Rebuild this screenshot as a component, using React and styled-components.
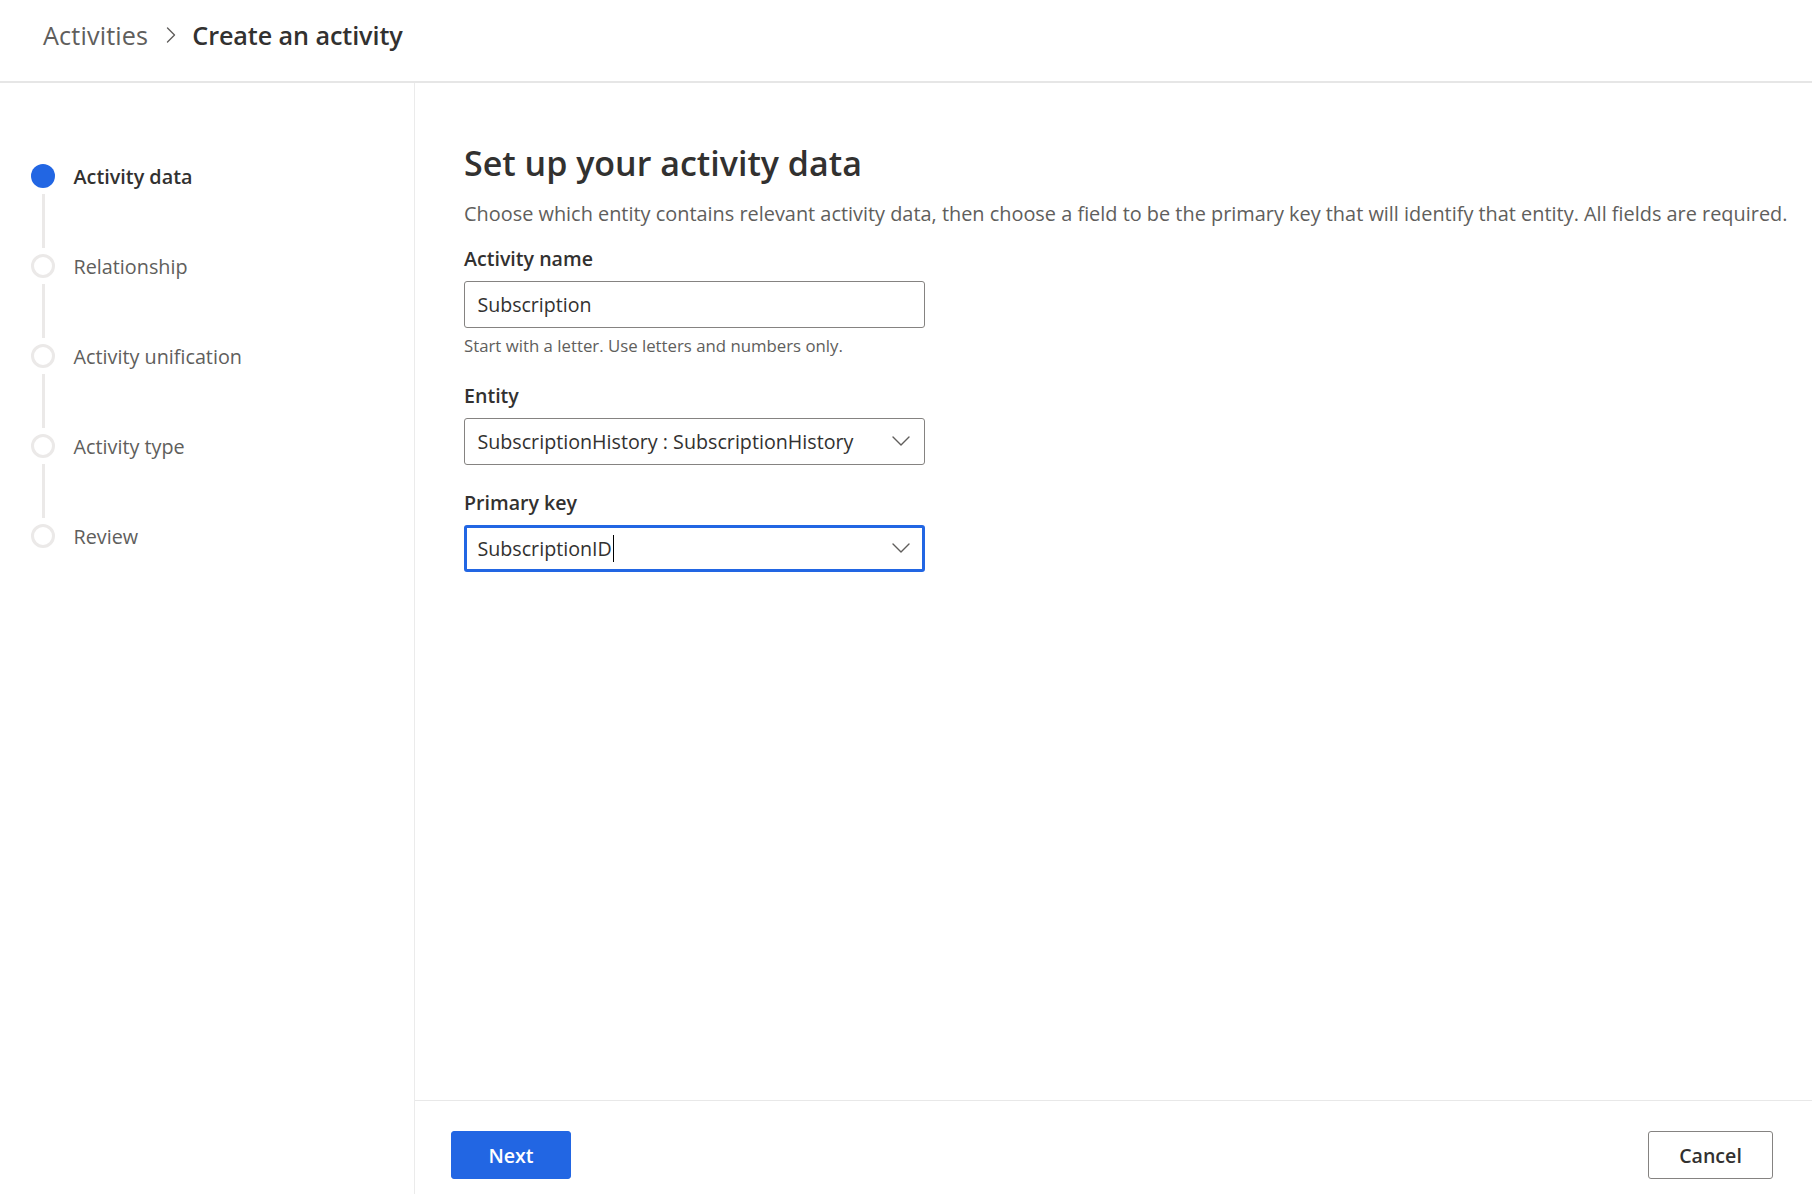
import React from "react";
import styled, { createGlobalStyle } from "styled-components";

const FONT = `"Open Sans", "Noto Sans", sans-serif`;
const BLUE = "#2266e3";

const GlobalStyle = createGlobalStyle`
  *, *::before, *::after { box-sizing: border-box; }
  html, body, #root { height: 100%; }
  body {
    margin: 0;
    background: #ffffff;
    font-family: ${FONT};
    color: #323130;
    -webkit-font-smoothing: antialiased;
  }
`;

const Page = styled.div`
  height: 100vh;
  display: flex;
  flex-direction: column;
  background: #fff;
`;

const Header = styled.header`
  height: 83px;
  flex: none;
  border-bottom: 2px solid #e6e6e6;
  padding: 17px 0 0 43px;
`;

const Breadcrumb = styled.nav`
  display: flex;
  align-items: center;
  height: 36px;
  font-size: 25.2px;
  line-height: 36px;
`;

const Crumb = styled.span`
  color: ${(p) => (p.$current ? "#323130" : "#605e5c")};
  font-weight: ${(p) => (p.$current ? 600 : 400)};
  letter-spacing: ${(p) => (p.$current ? "-0.1px" : "0.15px")};
`;

const CrumbSep = styled.span`
  display: flex;
  align-items: center;
  margin: 0 16px 0 18px;
  color: #605e5c;
`;

const Body = styled.div`
  flex: 1;
  display: flex;
  min-height: 0;
`;

const Sidebar = styled.aside`
  width: 415px;
  flex: none;
  border-right: 1px solid #ebebeb;
  padding: 81px 0 0 31px;
`;

const StepList = styled.ol`
  list-style: none;
  margin: 0;
  padding: 0;
`;

const StepRow = styled.li`
  display: flex;
  align-items: center;
  height: 24px;
  gap: 18.5px;
`;

const StepDot = styled.span`
  width: 24px;
  height: 24px;
  flex: none;
  border-radius: 50%;
  background: ${(p) => (p.$active ? BLUE : "#fff")};
  border: ${(p) => (p.$active ? "none" : "3px solid #ebe9e8")};
`;

const StepLabel = styled.span`
  font-size: 19.8px;
  line-height: 24px;
  padding-top: 2px;
  white-space: nowrap;
  color: ${(p) => (p.$active ? "#323130" : "#605e5c")};
  font-weight: ${(p) => (p.$active ? 600 : 400)};
`;

const Connector = styled.li`
  width: 3px;
  height: 54px;
  margin: 6px 0 6px 10.5px;
  background: #ebe9e8;
`;

const Main = styled.main`
  flex: 1;
  display: flex;
  flex-direction: column;
  min-width: 0;
`;

const Content = styled.section`
  flex: 1;
  padding: 59.6px 20px 0 49px;
`;

const Title = styled.h1`
  margin: 0;
  font-size: 34px;
  line-height: 40px;
  font-weight: 600;
  color: #323130;
`;

const Description = styled.p`
  margin: 17px 0 0;
  font-size: 19.9px;
  line-height: 28px;
  color: #605e5c;
  white-space: nowrap;
`;

const Form = styled.div`
  margin-top: 17px;
  width: 461px;
  display: flex;
  flex-direction: column;
  gap: 24px;
`;

const Field = styled.div`
  display: flex;
  flex-direction: column;
`;

const Label = styled.label`
  font-size: 19.6px;
  line-height: 28px;
  font-weight: 600;
  color: #323130;
  margin-bottom: 8px;
`;

const TextInput = styled.input`
  height: 47px;
  width: 100%;
  border: 1px solid #858381;
  border-radius: 3px;
  padding: 0 12.4px;
  font-family: ${FONT};
  font-size: 19.6px;
  color: #323130;
  background: #fff;
  outline: none;
`;

const Hint = styled.span`
  margin-top: 6px;
  font-size: 16.8px;
  line-height: 24px;
  color: #605e5c;
`;

const SelectBox = styled.div`
  height: 47px;
  width: 100%;
  display: flex;
  align-items: center;
  justify-content: space-between;
  border: ${(p) => (p.$focused ? `3px solid ${BLUE}` : "1px solid #858381")};
  border-radius: 3px;
  padding: ${(p) => (p.$focused ? "0 12px 0 10.4px" : "0 14px 0 12.4px")};
  font-size: 19.7px;
  color: #323130;
  background: #fff;
`;

const SelectValue = styled.span`
  display: flex;
  align-items: center;
  white-space: nowrap;
`;

const Caret = styled.span`
  display: inline-block;
  width: 1px;
  height: 27px;
  background: #000;
  margin-left: 1px;
`;

const Footer = styled.footer`
  flex: none;
  border-top: 1px solid #e8e8e8;
  padding: 30px 39px 15px 36px;
  display: flex;
  justify-content: space-between;
`;

const Button = styled.button`
  height: 48px;
  width: ${(p) => p.$width}px;
  border-radius: 3px;
  font-family: ${FONT};
  font-size: 19.6px;
  font-weight: 600;
  cursor: pointer;
  background: ${(p) => (p.$primary ? BLUE : "#fff")};
  color: ${(p) => (p.$primary ? "#fff" : "#323130")};
  border: ${(p) => (p.$primary ? `1px solid ${BLUE}` : "1px solid #858381")};
`;

const ChevronDown = () => (
  <svg width="18" height="10" viewBox="0 0 18 10" fill="none">
    <polyline points="1,1 9,9 17,1" stroke="#605e5c" strokeWidth="1.4" strokeLinecap="round" strokeLinejoin="round" />
  </svg>
);

const ChevronRight = () => (
  <svg width="10" height="16" viewBox="0 0 10 16" fill="none">
    <polyline points="1.5,1 8.5,8 1.5,15" stroke="#605e5c" strokeWidth="1.4" strokeLinecap="round" strokeLinejoin="round" />
  </svg>
);

const steps = ["Activity data", "Relationship", "Activity unification", "Activity type", "Review"];

export default function App() {
  return (
    <Page>
      <GlobalStyle />
      <Header>
        <Breadcrumb>
          <Crumb>Activities</Crumb>
          <CrumbSep>
            <ChevronRight />
          </CrumbSep>
          <Crumb $current>Create an activity</Crumb>
        </Breadcrumb>
      </Header>
      <Body>
        <Sidebar>
          <StepList>
            {steps.map((s, i) => (
              <React.Fragment key={s}>
                {i > 0 && <Connector aria-hidden="true" />}
                <StepRow>
                  <StepDot $active={i === 0} />
                  <StepLabel $active={i === 0}>{s}</StepLabel>
                </StepRow>
              </React.Fragment>
            ))}
          </StepList>
        </Sidebar>
        <Main>
          <Content>
            <Title>Set up your activity data</Title>
            <Description>
              Choose which entity contains relevant activity data, then choose a field to be the primary key that will identify that entity. All fields are required.
            </Description>
            <Form>
              <Field>
                <Label>Activity name</Label>
                <TextInput defaultValue="Subscription" readOnly />
                <Hint>Start with a letter. Use letters and numbers only.</Hint>
              </Field>
              <Field>
                <Label>Entity</Label>
                <SelectBox>
                  <SelectValue>SubscriptionHistory : SubscriptionHistory</SelectValue>
                  <ChevronDown />
                </SelectBox>
              </Field>
              <Field>
                <Label>Primary key</Label>
                <SelectBox $focused>
                  <SelectValue>
                    SubscriptionID
                    <Caret />
                  </SelectValue>
                  <ChevronDown />
                </SelectBox>
              </Field>
            </Form>
          </Content>
          <Footer>
            <Button $primary $width={120}>Next</Button>
            <Button $width={125}>Cancel</Button>
          </Footer>
        </Main>
      </Body>
    </Page>
  );
}
